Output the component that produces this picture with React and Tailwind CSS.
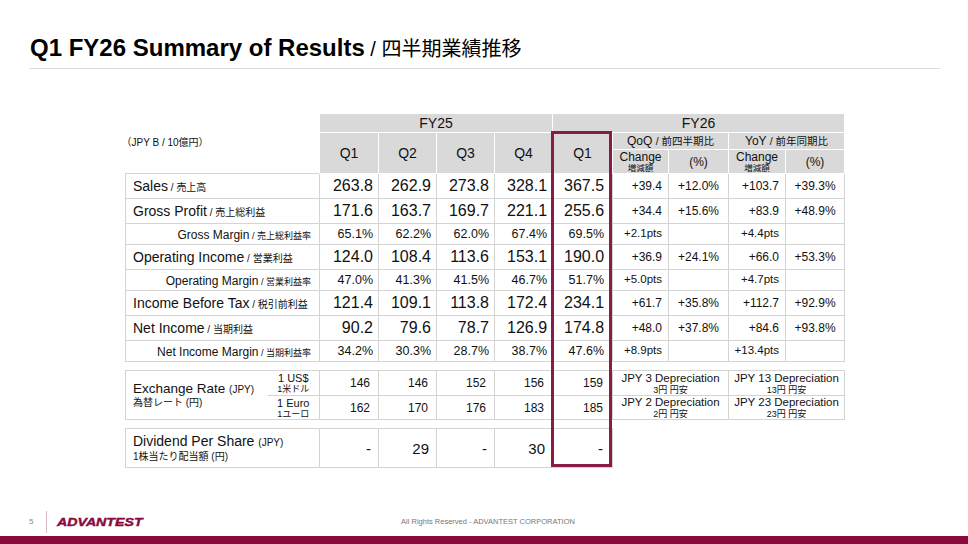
import React from 'react';

const FONT = "font-['Liberation_Sans','Noto_Sans_CJK_JP',sans-serif]";
const HEAD = 'bg-[#d9d9d9] border border-white font-normal p-0 text-center align-middle leading-none text-[#111]';
const CELL = 'border border-[#d4d4d4] p-0 leading-none align-middle whitespace-nowrap';

const rows = [
  { en: 'Sales', jp: '売上高', big: true, q: ['263.8', '262.9', '273.8', '328.1'], cur: '367.5', qoq: '+39.4', qoqP: '+12.0%', yoy: '+103.7', yoyP: '+39.3%' },
  { en: 'Gross Profit', jp: '売上総利益', big: true, q: ['171.6', '163.7', '169.7', '221.1'], cur: '255.6', qoq: '+34.4', qoqP: '+15.6%', yoy: '+83.9', yoyP: '+48.9%' },
  { en: 'Gross Margin', jp: '売上総利益率', q: ['65.1%', '62.2%', '62.0%', '67.4%'], cur: '69.5%', qoq: '+2.1pts', yoy: '+4.4pts' },
  { en: 'Operating Income', jp: '営業利益', big: true, q: ['124.0', '108.4', '113.6', '153.1'], cur: '190.0', qoq: '+36.9', qoqP: '+24.1%', yoy: '+66.0', yoyP: '+53.3%' },
  { en: 'Operating Margin', jp: '営業利益率', q: ['47.0%', '41.3%', '41.5%', '46.7%'], cur: '51.7%', qoq: '+5.0pts', yoy: '+4.7pts' },
  { en: 'Income Before Tax', jp: '税引前利益', big: true, q: ['121.4', '109.1', '113.8', '172.4'], cur: '234.1', qoq: '+61.7', qoqP: '+35.8%', yoy: '+112.7', yoyP: '+92.9%' },
  { en: 'Net Income', jp: '当期利益', big: true, q: ['90.2', '79.6', '78.7', '126.9'], cur: '174.8', qoq: '+48.0', qoqP: '+37.8%', yoy: '+84.6', yoyP: '+93.8%' },
  { en: 'Net Income Margin', jp: '当期利益率', q: ['34.2%', '30.3%', '28.7%', '38.7%'], cur: '47.6%', qoq: '+8.9pts', yoy: '+13.4pts' },
];

const fx = [
  { en: '1 US$', jp: '1米ドル', vals: ['146', '146', '152', '156', '159'], qoq: ['JPY 3 Depreciation', '3円 円安'], yoy: ['JPY 13 Depreciation', '13円 円安'] },
  { en: '1 Euro', jp: '1ユーロ', vals: ['162', '170', '176', '183', '185'], qoq: ['JPY 2 Depreciation', '2円 円安'], yoy: ['JPY 23 Depreciation', '23円 円安'] },
];

const dividends = ['-', '29', '-', '30', '-'];

const Stack = ({ top, bottom }) => (
  <>
    <div className="text-[11.5px] leading-[13px]">{top}</div>
    <div className="text-[9px] leading-[10px]">{bottom}</div>
  </>
);

const ChangeHead = () => (
  <th className={HEAD}>
    <div className="text-[12px] leading-[13px]">Change</div>
    <div className="text-[8.5px] leading-[9px]">増減額</div>
  </th>
);

const ResultsTable = () => (
  <table className="table-fixed border-collapse w-[719px]">
    <colgroup>
      <col className="w-[194px]" />
      <col className="w-[59px]" />
      <col className="w-[58px]" />
      <col className="w-[58px]" />
      <col className="w-[58px]" />
      <col className="w-[60px]" />
      <col className="w-[56px]" />
      <col className="w-[60px]" />
      <col className="w-[57px]" />
      <col className="w-[59px]" />
    </colgroup>
    <thead>
      <tr className="h-[19px]">
        <th rowSpan={3} className="p-0 align-top text-left font-normal">
          <div className="pt-[23px] -ml-[4px] text-[10px] leading-[12px]">（JPY B / 10億円）</div>
        </th>
        <th colSpan={4} className={`${HEAD} text-[14px]`}>FY25</th>
        <th colSpan={5} className={`${HEAD} text-[14px]`}>FY26</th>
      </tr>
      <tr className="h-[17px]">
        {['Q1', 'Q2', 'Q3', 'Q4', 'Q1'].map((q, i) => (
          <th key={i} rowSpan={2} className={`${HEAD} text-[14px]`}>{q}</th>
        ))}
        <th colSpan={2} className={`${HEAD} text-[12px]`}>
          QoQ <span className="text-[10.5px]">/ 前四半期比</span>
        </th>
        <th colSpan={2} className={`${HEAD} text-[12px]`}>
          YoY <span className="text-[10.5px]">/ 前年同期比</span>
        </th>
      </tr>
      <tr className="h-[24px]">
        <ChangeHead />
        <th className={`${HEAD} text-[12px]`}>(%)</th>
        <ChangeHead />
        <th className={`${HEAD} text-[12px]`}>(%)</th>
      </tr>
    </thead>
    <tbody>
      {rows.map((r) => (
        <tr key={r.en} className={r.big ? 'h-[25px]' : 'h-[21px]'}>
          <td className={`${CELL} ${r.big ? 'text-left pl-[7px]' : 'text-right pr-[8px]'}`}>
            <span className={r.big ? 'text-[14px]' : 'text-[12px]'}>{r.en}</span>
            <span className={r.big ? 'text-[10px]' : 'text-[9px]'}> / {r.jp}</span>
          </td>
          {r.q.map((v, i) => (
            <td key={i} className={`${CELL} text-right pr-[5px] ${r.big ? 'text-[16px]' : 'text-[12.5px]'}`}>{v}</td>
          ))}
          <td className={`${CELL} text-right pr-[8px] ${r.big ? 'text-[16px]' : 'text-[12.5px]'}`}>{r.cur}</td>
          <td className={`${CELL} text-right pr-[6px] ${r.big ? 'text-[12px]' : 'text-[11.5px]'}`}>{r.qoq}</td>
          <td className={`${CELL} text-center text-[12px]`}>{r.qoqP}</td>
          <td className={`${CELL} text-right pr-[6px] ${r.big ? 'text-[12px]' : 'text-[11.5px]'}`}>{r.yoy}</td>
          <td className={`${CELL} text-center text-[12px]`}>{r.yoyP}</td>
        </tr>
      ))}
    </tbody>
  </table>
);

const ExchangeTable = () => (
  <table className="table-fixed border-collapse w-[719px] mt-[8px]">
    <colgroup>
      <col className="w-[142px]" />
      <col className="w-[52px]" />
      <col className="w-[59px]" />
      <col className="w-[58px]" />
      <col className="w-[58px]" />
      <col className="w-[58px]" />
      <col className="w-[60px]" />
      <col className="w-[56px]" />
      <col className="w-[60px]" />
      <col className="w-[57px]" />
      <col className="w-[59px]" />
    </colgroup>
    <tbody>
      {fx.map((r, idx) => (
        <tr key={r.en} className={idx === 0 ? 'h-[25px]' : 'h-[24px]'}>
          {idx === 0 && (
            <td rowSpan={2} className="border-y border-l border-[#d4d4d4] p-0 pl-[7px] align-middle whitespace-nowrap">
              <div className="text-[13.5px] leading-[15px]">
                Exchange Rate <span className="text-[10px]">(JPY)</span>
              </div>
              <div className="text-[10px] leading-[12px]">為替レート (円)</div>
            </td>
          )}
          <td className="border-y border-r border-[#d4d4d4] p-0 text-center align-middle whitespace-nowrap">
            <div className="text-[11px] leading-[12px]">{r.en}</div>
            <div className="text-[9px] leading-[10px]">{r.jp}</div>
          </td>
          {r.vals.map((v, i) => (
            <td key={i} className={`${CELL} text-right text-[12px] ${i === 4 ? 'pr-[9px]' : 'pr-[8px]'}`}>{v}</td>
          ))}
          <td colSpan={2} className={`${CELL} text-center`}>
            <Stack top={r.qoq[0]} bottom={r.qoq[1]} />
          </td>
          <td colSpan={2} className={`${CELL} text-center`}>
            <Stack top={r.yoy[0]} bottom={r.yoy[1]} />
          </td>
        </tr>
      ))}
    </tbody>
  </table>
);

const DividendTable = () => (
  <table className="table-fixed border-collapse w-[487px] mt-[8px]">
    <colgroup>
      <col className="w-[194px]" />
      <col className="w-[59px]" />
      <col className="w-[58px]" />
      <col className="w-[58px]" />
      <col className="w-[58px]" />
      <col className="w-[60px]" />
    </colgroup>
    <tbody>
      <tr className="h-[39px]">
        <td className={`${CELL} pl-[7px]`}>
          <div className="text-[14px] leading-[16px]">
            Dividend Per Share <span className="text-[10px]">(JPY)</span>
          </div>
          <div className="text-[10px] leading-[12px]">1株当たり配当額 (円)</div>
        </td>
        {dividends.map((v, i) => (
          <td key={i} className={`${CELL} text-right text-[15px] ${i === 4 ? 'pr-[9px]' : 'pr-[7px]'}`}>{v}</td>
        ))}
      </tr>
    </tbody>
  </table>
);

export default function App() {
  return (
    <div className={`w-[968px] h-[544px] bg-white flex flex-col overflow-hidden text-[#111] ${FONT}`}>
      <header className="pl-[30px] pt-[34px]">
        <h1 className="text-[24px] leading-[28px] font-bold text-black">
          Q1 FY26 Summary of Results<span className="text-[20px] font-normal"> / 四半期業績推移</span>
        </h1>
        <div className="mt-[5px] h-px w-[910px] bg-[#dadada]" />
      </header>

      <main className="relative ml-[125px] mt-[44px] w-[719px]">
        <ResultsTable />
        <ExchangeTable />
        <DividendTable />
        {/* current quarter highlight */}
        <div className="pointer-events-none absolute left-[426px] top-[18px] w-[61px] h-[336px] border-[3px] border-[#8b1a48]" />
      </main>

      <footer className="mt-auto h-[28px] grid grid-cols-[1fr_auto_1fr] items-center">
        <div className="flex items-center pl-[29px]">
          <span className="w-[17px] text-[8px] text-[#888]">5</span>
          <span className="h-[22px] w-px bg-[#d9b8c4]" />
          <span className="ml-[10px] inline-block origin-left scale-x-[1.35] text-[10.5px] leading-none font-black italic text-[#8b0a3d] [-webkit-text-stroke:0.4px_#8b0a3d]">
            ADVANTEST
          </span>
        </div>
        <div className="pl-[8px] text-[7.5px] text-[#777]">All Rights Reserved - ADVANTEST CORPORATION</div>
        <div />
      </footer>
      <div className="h-[8px] bg-[#8b0a3d]" />
    </div>
  );
}
